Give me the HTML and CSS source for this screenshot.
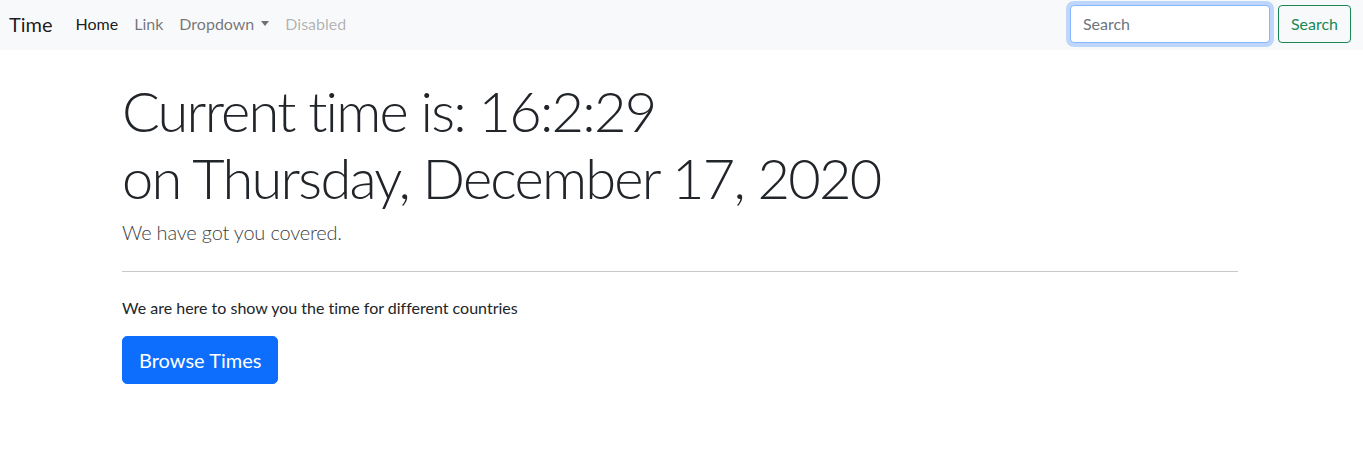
FILE: index.html
```html
<!DOCTYPE html>
<html lang="en">
<head>
<meta charset="utf-8">
<title>Time</title>
<link rel="stylesheet" href="styles.css">
</head>
<body>
<nav class="navbar">
  <a class="brand" href="#">Time</a>
  <ul class="nav">
    <li><a class="nav-link active" href="#">Home</a></li>
    <li><a class="nav-link" href="#">Link</a></li>
    <li><a class="nav-link" href="#">Dropdown<span class="caret"></span></a></li>
    <li><a class="nav-link disabled" href="#">Disabled</a></li>
  </ul>
  <form class="search">
    <input class="search-input" type="search" placeholder="Search">
    <button class="search-btn" type="button">Search</button>
  </form>
</nav>
<main class="hero">
  <h1 class="display">Current time is: 16:2:29<br>on Thursday, December 17, 2020</h1>
  <p class="lead">We have got you covered.</p>
  <hr class="rule">
  <p class="text">We are here to show you the time for different countries</p>
  <a class="btn-primary" href="#">Browse Times</a>
</main>
</body>
</html>
```
FILE: styles.css
```css
* { box-sizing: border-box; }
body {
  margin: 0;
  font-family: Lato, "Open Sans", sans-serif;
  font-size: 16px;
  line-height: 1.5;
  color: #212529;
  background: #fff;
  font-variant-ligatures: none;
}
a { text-decoration: none; }
.navbar {
  display: flex;
  align-items: center;
  height: 50px;
  padding: 0 12px 3px 9px;
  background: #f8f9fa;
}
.brand {
  font-size: 20px;
  line-height: 30px;
  color: rgba(0,0,0,.9);
  margin-right: 15px;
}
.nav {
  display: flex;
  list-style: none;
  margin: 0;
  padding: 0;
}
.nav-link {
  display: block;
  padding: 8px 8px;
  color: rgba(0,0,0,.55);
}
.nav-link.active { color: rgba(0,0,0,.9); }
.nav-link.disabled { color: rgba(0,0,0,.3); }
.caret {
  display: inline-block;
  margin-left: 7px;
  vertical-align: 4px;
  border-top: 5px solid;
  border-left: 4.5px solid transparent;
  border-right: 4.5px solid transparent;
}
.search {
  display: flex;
  margin-left: auto;
}
.search-input {
  width: 200px;
  height: 38px;
  margin-right: 8px;
  padding: 6px 12px;
  font: inherit;
  color: #212529;
  background: #fff;
  border: 1px solid #86b7fe;
  border-radius: 4px;
  outline: 0;
  box-shadow: 0 0 0 4px rgba(13,110,253,.25);
}
.search-input::placeholder { color: #6c757d; }
.search-btn {
  height: 38px;
  padding: 6px 12px;
  font: inherit;
  color: #198754;
  background: transparent;
  border: 1px solid #198754;
  border-radius: 4px;
}
.hero {
  width: 1116px;
  margin-left: 122px;
  padding-top: 27px;
}
.display {
  margin: 0 0 6px;
  font-size: 56px;
  font-weight: 300;
  line-height: 1.2;
  letter-spacing: -1.75px;
}
.lead {
  margin: 0;
  font-size: 20px;
  font-weight: 300;
  line-height: 30px;
  letter-spacing: -0.2px;
  color: #3d4246;
}
.rule {
  margin: 24px 0;
  border: 0;
  border-top: 1px solid #c8c9ca;
}
.text {
  margin: 0 0 16px;
}
.btn-primary {
  display: inline-block;
  padding: 8px 16px;
  font-size: 20px;
  line-height: 30px;
  color: #fff;
  background: #0d6efd;
  border: 1px solid #0d6efd;
  border-radius: 5px;
}
```
